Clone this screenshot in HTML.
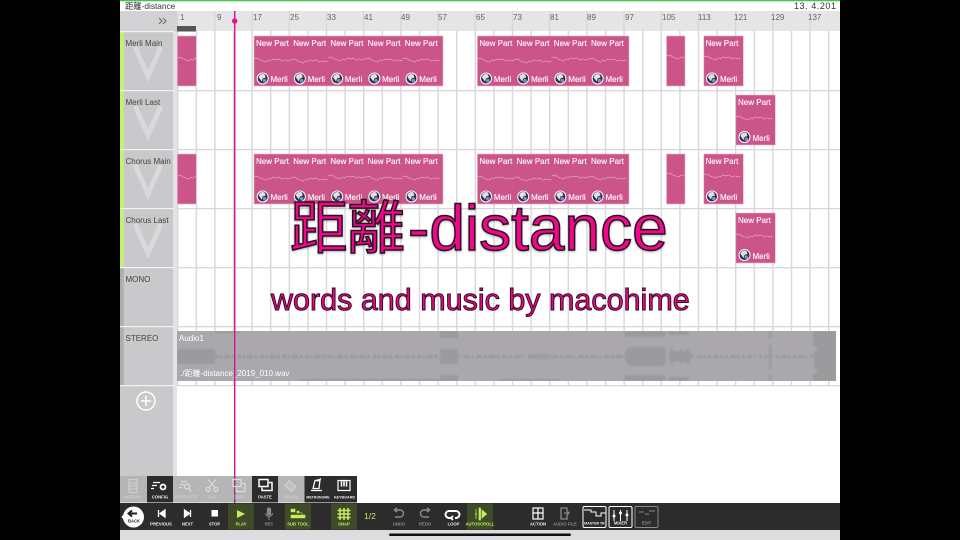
<!DOCTYPE html>
<html><head><meta charset="utf-8"><style>
html,body{margin:0;padding:0;background:#000;width:960px;height:540px;overflow:hidden}
svg{display:block;filter:blur(.35px)}
text{font-family:"Liberation Sans","Noto Sans CJK JP",sans-serif}
.np,.ml{fill:#fff;font-size:8px;stroke:#fff;stroke-width:.12}
.tl{fill:#444;font-size:8px}
.rn{fill:#666;font-size:8px}
.lb{font-size:4.2px;font-weight:bold;fill:#eee;text-anchor:middle}
.lg{font-size:4.2px;font-weight:bold;fill:#8c8c8c;text-anchor:middle}
.lh{font-size:4.2px;font-weight:bold;fill:#c6ec62;text-anchor:middle}
.lu{font-size:4.2px;font-weight:bold;fill:#cdcdcd;text-anchor:middle}
.s{fill:none;stroke:#fff;stroke-width:1.3}
.sg{fill:none;stroke:#8a8a8a;stroke-width:1.3}
.sh{fill:none;stroke:#c6ec62;stroke-width:1.3}
.su{fill:none;stroke:#dcdcdc;stroke-width:1.2}
.t1{fill:#f0088c;stroke:#2a0f20;stroke-width:1.5;filter:drop-shadow(0 1px 1px rgba(0,0,0,.3))}
</style></head><body>
<svg width="960" height="540" viewBox="0 0 960 540" xmlns="http://www.w3.org/2000/svg">
<defs>
<pattern id="g" x="177" y="0" width="18.6" height="540" patternUnits="userSpaceOnUse"><rect x="0" y="0" width="1.4" height="540" fill="#d9d7d9"/></pattern>
<pattern id="rg" x="177" y="0" width="37.2" height="540" patternUnits="userSpaceOnUse"><rect x="0" y="0" width="1.2" height="540" fill="#d6d5d7"/></pattern>
<g id="w"><path d="M0 0l2 1 2-1 2 2 3 1 3 1 2-2 2 1 3-2 3 1 3-1 3 2 3-1 3 1 3-1" fill="none" stroke="#e9a3c1" stroke-width=".9" stroke-dasharray="2 .6"/></g>
<g id="a"><circle r="6" fill="#fff"/><circle r="5" fill="#28304e"/><path d="M-4-1a4 4 0 0 1 6-3l1 3-3 1 -1 3z" fill="#e6dce6"/><circle cx="1.800" cy="2.200" r="1.800" fill="#7f8fc0"/></g>
<g id="v"><path d="M-13 0L0 29 13 0" fill="none" stroke="#d9d8da" stroke-width="5"/></g>
</defs>

<rect width="960" height="540" fill="#000"/>
<rect x="120" y="0" width="720" height="540" fill="#fff"/>
<rect x="120" y="0" width="720" height="1.300" fill="#3fc94a"/>

<!-- grid -->
<rect x="177" y="31" width="663" height="354" fill="url(#g)"/>
<rect x="177" y="11" width="663" height="20" fill="#e5e4e6"/>
<rect x="177" y="11" width="663" height="20" fill="url(#rg)"/>
<g fill="#d9d7d9">
<rect x="177" y="90" width="663" height="1.300"/><rect x="177" y="149" width="663" height="1.300"/><rect x="177" y="208" width="663" height="1.300"/><rect x="177" y="267" width="663" height="1.300"/><rect x="177" y="326" width="663" height="1.300"/><rect x="177" y="385" width="663" height="1.300"/>
</g>
<rect x="177" y="26" width="19" height="5.500" fill="#555"/>

<!-- title strip -->
<text x="125" y="9" font-size="8.300" fill="#333">距離-distance</text>
<text x="794" y="9" font-size="9" fill="#333" textLength="42">13. 4.201</text>

<!-- ruler numbers -->
<g class="rn">
<text x="180" y="20">1</text><text x="217" y="20">9</text><text x="253" y="20">17</text><text x="290" y="20">25</text><text x="327" y="20">33</text><text x="364" y="20">41</text><text x="401" y="20">49</text><text x="438" y="20">57</text><text x="476" y="20">65</text><text x="513" y="20">73</text><text x="550" y="20">81</text><text x="587" y="20">89</text><text x="625" y="20">97</text><text x="662" y="20">105</text><text x="698" y="20">113</text><text x="734" y="20">121</text><text x="771" y="20">129</text><text x="808" y="20">137</text>
</g>

<!-- left panel -->
<rect x="120" y="11" width="57" height="465" fill="#c9c8ca"/>
<rect x="173" y="32" width="4" height="444" fill="#e3e2e4"/>
<rect x="120" y="11" width="57" height="20" fill="#d2d1d3"/>
<rect x="120" y="32" width="3.700" height="235" fill="#c5f26e"/>
<rect x="120" y="267" width="3.700" height="118" fill="#aeadaf"/>
<g fill="#f2f1f3">
<rect x="120" y="31" width="55" height="1.200"/><rect x="120" y="90" width="55" height="1.200"/><rect x="120" y="149" width="55" height="1.200"/><rect x="120" y="208" width="55" height="1.200"/><rect x="120" y="267" width="55" height="1.200"/><rect x="120" y="326" width="55" height="1.200"/><rect x="120" y="385" width="55" height="1.200"/>
</g>
<path d="M159 18l3 3-3 3M163 18l3 3-3 3" fill="none" stroke="#666" stroke-width="1"/>
<use href="#v" x="148" y="47"/><use href="#v" x="148" y="106"/><use href="#v" x="148" y="165"/><use href="#v" x="148" y="224"/>
<text class="tl" x="125.500" y="46">Merli Main</text>
<text class="tl" x="125.500" y="105">Merli Last</text>
<text class="tl" x="125.500" y="164">Chorus Main</text>
<text class="tl" x="125.500" y="223">Chorus Last</text>
<text class="tl" x="125.500" y="282">MONO</text>
<text class="tl" x="125.500" y="341">STEREO</text>
<circle cx="146" cy="401" r="9" fill="none" stroke="#fff" stroke-width="1.500"/>
<path d="M146 396v10M141 401h10" stroke="#fff" stroke-width="1.600"/>

<!-- clips -->
<g fill="#cb5588" stroke="#e9b5cd" stroke-width=".6">
<rect x="177.300" y="36" width="19" height="50"/><rect x="254" y="36" width="189" height="50"/><rect x="477.400" y="36" width="151.600" height="50"/><rect x="666.500" y="36" width="18.500" height="50"/><rect x="703.800" y="36" width="39.500" height="50"/>
<rect x="735.800" y="95" width="39.500" height="50"/>
<rect x="177.300" y="154" width="19" height="50"/><rect x="254" y="154" width="189" height="50"/><rect x="477.400" y="154" width="151.600" height="50"/><rect x="666.500" y="154" width="18.500" height="50"/><rect x="703.800" y="154" width="39.500" height="50"/>
<rect x="735.800" y="213" width="39.500" height="50"/>
</g>
<clipPath id="c1"><rect x="177" y="30" width="19" height="200"/></clipPath>
<clipPath id="c2"><rect x="666.500" y="30" width="18.500" height="200"/></clipPath>
<!-- waves -->
<g clip-path="url(#c1)"><use href="#w" x="177" y="57"/><use href="#w" x="177" y="175"/></g>
<g clip-path="url(#c2)"><use href="#w" x="666.500" y="55"/><use href="#w" x="666.500" y="173"/></g>
<use href="#w" x="254" y="58"/><use href="#w" x="291.200" y="59"/><use href="#w" x="328.400" y="57"/><use href="#w" x="365.600" y="58"/><use href="#w" x="402.800" y="58"/><use href="#w" x="477.400" y="58"/><use href="#w" x="514.600" y="59"/><use href="#w" x="551.800" y="57"/><use href="#w" x="589" y="58"/><use href="#w" x="704" y="56"/><use href="#w" x="736" y="116"/>
<use href="#w" x="254" y="176"/><use href="#w" x="291.200" y="177"/><use href="#w" x="328.400" y="175"/><use href="#w" x="365.600" y="176"/><use href="#w" x="402.800" y="176"/><use href="#w" x="477.400" y="176"/><use href="#w" x="514.600" y="177"/><use href="#w" x="551.800" y="175"/><use href="#w" x="589" y="176"/><use href="#w" x="704" y="174"/><use href="#w" x="736" y="234"/>
<!-- avatars -->
<use href="#a" x="262.700" y="78.500"/><use href="#a" x="299.900" y="78.500"/><use href="#a" x="337.100" y="78.500"/><use href="#a" x="374.300" y="78.500"/><use href="#a" x="411.500" y="78.500"/><use href="#a" x="486" y="78.500"/><use href="#a" x="523.200" y="78.500"/><use href="#a" x="560.400" y="78.500"/><use href="#a" x="597.600" y="78.500"/><use href="#a" x="712" y="78.500"/><use href="#a" x="744.500" y="137"/>
<use href="#a" x="262.700" y="196.500"/><use href="#a" x="299.900" y="196.500"/><use href="#a" x="337.100" y="196.500"/><use href="#a" x="374.300" y="196.500"/><use href="#a" x="411.500" y="196.500"/><use href="#a" x="486" y="196.500"/><use href="#a" x="523.200" y="196.500"/><use href="#a" x="560.400" y="196.500"/><use href="#a" x="597.600" y="196.500"/><use href="#a" x="712" y="196.500"/><use href="#a" x="744.500" y="255"/>
<!-- clip text -->
<text class="np" x="256" y="46">New Part</text><text class="np" x="293.200" y="46">New Part</text><text class="np" x="330.400" y="46">New Part</text><text class="np" x="367.600" y="46">New Part</text><text class="np" x="404.800" y="46">New Part</text><text class="np" x="479.400" y="46">New Part</text><text class="np" x="516.600" y="46">New Part</text><text class="np" x="553.800" y="46">New Part</text><text class="np" x="591" y="46">New Part</text><text class="np" x="705.500" y="46">New Part</text>
<text class="np" x="738" y="105">New Part</text>
<text class="np" x="256" y="164">New Part</text><text class="np" x="293.200" y="164">New Part</text><text class="np" x="330.400" y="164">New Part</text><text class="np" x="367.600" y="164">New Part</text><text class="np" x="404.800" y="164">New Part</text><text class="np" x="479.400" y="164">New Part</text><text class="np" x="516.600" y="164">New Part</text><text class="np" x="553.800" y="164">New Part</text><text class="np" x="591" y="164">New Part</text><text class="np" x="705.500" y="164">New Part</text>
<text class="np" x="738" y="223">New Part</text>
<text class="ml" x="270.500" y="82">Merli</text><text class="ml" x="307.700" y="82">Merli</text><text class="ml" x="344.900" y="82">Merli</text><text class="ml" x="382.100" y="82">Merli</text><text class="ml" x="419.300" y="82">Merli</text><text class="ml" x="493.900" y="82">Merli</text><text class="ml" x="531.100" y="82">Merli</text><text class="ml" x="568.300" y="82">Merli</text><text class="ml" x="605.500" y="82">Merli</text><text class="ml" x="720" y="82">Merli</text>
<text class="ml" x="752.500" y="141">Merli</text>
<text class="ml" x="270.500" y="200">Merli</text><text class="ml" x="307.700" y="200">Merli</text><text class="ml" x="344.900" y="200">Merli</text><text class="ml" x="382.100" y="200">Merli</text><text class="ml" x="419.300" y="200">Merli</text><text class="ml" x="493.900" y="200">Merli</text><text class="ml" x="531.100" y="200">Merli</text><text class="ml" x="568.300" y="200">Merli</text><text class="ml" x="605.500" y="200">Merli</text><text class="ml" x="720" y="200">Merli</text>
<text class="ml" x="752.500" y="259">Merli</text>

<!-- audio clip -->
<rect x="177" y="331" width="659" height="50" fill="#aaa8ac"/>
<clipPath id="ac"><rect x="177" y="331" width="659" height="50"/></clipPath>
<g clip-path="url(#ac)">
<g fill="#9b9a9d" style="filter:blur(.7px)">
<path d="M177 349h38v15h-38z"/>
<path d="M440 349l18 0 0 15-18 0z"/>
<path d="M625 351q3-4 8-4l28 0q5 0 5 5v9q0 4-5 5h-28q-6 0-8-6z"/>
<path d="M669 351h22v11h-22zM671 348h2v17h-2zM680 349h2v15h-2zM687 349h2v15h-2z"/>
<path d="M769 345h2.500v24h-2.500z"/>
<path d="M813 331h25v50h-25v-7l6-3-5-3 0-16 5-3-6-3z"/>
<path d="M440 331h18v7h-18zM440 375h18v6h-18zM625 331h40v6h-40zM625 375h40v6h-40zM669 331h20v4h-20zM669 377h20v4h-20zM769 331h2.500v7h-2.500zM769 375h2.500v6h-2.500z"/>
<path d="M215 331h25v2h-25zM300 379h140v2h-140zM500 379h60v2h-60z"/>
</g>
<g fill="none" stroke="#9b9a9d" style="filter:blur(.4px)">
<path d="M215 356.500H440" stroke-width="3.500" stroke-dasharray="4 1.500 2 2 6 1.500 3 2.500"/>
<path d="M458 356.500H625" stroke-width="3" stroke-dasharray="3 2 7 1.500 2 3 5 2"/>
<path d="M530 356.500H552" stroke-width="5" stroke-dasharray="2 1"/>
<path d="M691 356.500H813" stroke-width="3" stroke-dasharray="3 2.500 5 1.500 2 3"/>
</g>
</g>
<text x="179" y="341" font-size="8" fill="#fff">Audio1</text>
<text x="180" y="376" font-size="8" fill="#fff">./距離-distance_2019_010.wav</text>

<!-- titles -->
<text class="t1" x="290" y="248" font-size="57.500">距離</text>
<text class="t1" x="408" y="250" font-size="64">-distance</text>
<text x="271" y="310" font-size="30.500" fill="#e8088a" stroke="#33091f" stroke-width="1">words and music by macohime</text>

<!-- playhead -->
<rect x="234" y="11" width="1.400" height="492" fill="#d6148c"/>
<circle cx="234.700" cy="21" r="2.700" fill="#e0148c"/>

<!-- upper toolbar -->
<rect x="120" y="476" width="237" height="26.500" fill="rgba(70,70,70,.4)"/>
<rect x="147" y="476" width="26" height="26.500" fill="#2c2c2c"/>
<rect x="252" y="476" width="26" height="26.500" fill="#2c2c2c"/>
<rect x="304.500" y="476" width="52.500" height="26.500" fill="#2c2c2c"/>
<g transform="translate(0,-1.500)">
<path d="M129 481h8v13h-8zM129 484.500h8M129 487.500h8M129 490.500h8" fill="none" stroke="#d2d2d2" stroke-width="1"/>
<g class="s"><path d="M153 484h7M152 487h5M151 490h3"/><circle cx="163" cy="488.500" r="2.500" stroke-width="1.800"/></g>
<g class="su"><path d="M181 483h6M180 486h4M179 489h3"/><circle cx="187" cy="488" r="2.500"/><path d="M189 490l2 3"/></g>
<g class="su"><circle cx="208" cy="491" r="2"/><circle cx="216" cy="491" r="2"/><path d="M209 489l7-8M215 489l-7-8"/></g>
<g class="su"><rect x="233" y="481" width="8" height="7"/><path d="M242 485h3v8h-9v-4"/></g>
<g class="s"><rect x="259" y="481" width="9" height="7" stroke-width="1.500"/><path d="M269 484h3v8h-10v-3" stroke-width="1.500"/></g>
<path d="M285 487l4-5 7 6-4 5z" fill="#c0c0c0" stroke="#d4d4d4" stroke-width="1"/>
<g class="s"><path d="M313 490l2-8 5-1-1 9zM311 492h11M317 483l4-3" stroke-width="1.300"/></g>
<g class="s"><rect x="338" y="482" width="12" height="10" stroke-width="1.200"/><path d="M341.500 482v6M344 482v6M346.500 482v6" stroke-width="1.500"/></g>
</g>
<text class="lu" x="133" y="498.500">HISTORY</text><text class="lb" x="160" y="498.500">CONFIG</text><text class="lu" x="186" y="498.500">PROPERTY</text><text class="lu" x="212" y="498.500">CUT</text><text class="lu" x="239" y="498.500">COPY</text><text class="lb" x="265" y="498.500">PASTE</text><text class="lu" x="291" y="498.500">ERASE</text><text class="lb" x="318" y="498.500" style="font-size:3.500px">METRONOME</text><text class="lb" x="344.500" y="498.500" style="font-size:3.700px">KEYBOARD</text>

<!-- bottom bar -->
<rect x="120" y="503" width="720" height="27" fill="#2c2c2c"/>
<rect x="120" y="530" width="720" height="10" fill="#dedcde"/>
<rect x="389" y="533.500" width="182" height="2.500" rx="1.200" fill="#111"/>
<g fill="#3f4a28"><rect x="228" y="503.500" width="26" height="26"/><rect x="285" y="503.500" width="26" height="26"/><rect x="331" y="503.500" width="26" height="26"/><rect x="467" y="503.500" width="26" height="26"/></g>

<circle cx="133.500" cy="517" r="10.500" fill="#fff"/>
<path d="M121.500 517l4-5v10z" fill="#fff"/>
<path d="M132 510.500l-3.500 3 3.500 3M129 513.500h8" fill="none" stroke="#222" stroke-width="2"/>
<text x="134" y="522.500" font-size="4.200" font-weight="bold" fill="#222" text-anchor="middle">BACK</text>

<path d="M158.500 510v7M165 510v7l-5-3.500z" fill="#fff" stroke="#fff" stroke-width="1.300"/>
<path d="M184.500 510v7l5-3.500zM190.500 510v7" fill="#fff" stroke="#fff" stroke-width="1.300"/>
<rect x="211.500" y="510" width="6.500" height="6.500" fill="#fff"/>
<path d="M237 510l8 4-8 4z" fill="#c6ec62"/>
<g class="sg"><rect x="267.500" y="508" width="3" height="7" rx="1.500" fill="#8a8a8a"/><path d="M265.500 513a3.500 3.500 0 0 0 7 0M269 517v3" stroke-width="1"/></g>
<path d="M291 509h4v3h-4zM297 511h2v2h-2zM291 515h14v3h-14zM300 512l3 2" fill="#c6ec62" stroke="#c6ec62" stroke-width=".6"/>
<path d="M340 508v12M344 508v12M348 508v12M337.500 510.500h13M337.500 514h13M337.500 517.500h13" class="sh" style="stroke-width:1.500"/>
<text x="370" y="519" font-size="8.500" fill="#c6ec62" text-anchor="middle">1/2</text>
<path d="M395 510h5a3.500 3.500 0 0 1 0 7h-5M397 508l-2.500 2 2.500 2" class="sg" style="stroke-width:1.500"/>
<path d="M429 510h-5a3.500 3.500 0 0 0 0 7h5M427 508l2.500 2-2.500 2" class="sg" style="stroke-width:1.500"/>
<path d="M451 518h-2a3.500 3.500 0 0 1 0-7h7a3.500 3.500 0 0 1 0 7h-1M453 516l-2 2 2 2" class="s" style="stroke-width:1.900"/>
<path d="M475 514h2M476 509v10M479 508h1.500v12H479zM482 510l4.500 4-4.500 4z" fill="#c6ec62" stroke="#c6ec62" stroke-width=".8"/>
<rect x="533" y="508" width="10" height="11" class="s" style="stroke-width:1.200"/><path d="M538 508v11M533 513h10" class="s" style="stroke-width:1.200"/>
<path d="M561 508h6v3l2 2-2 2v4h-6zM564 513h4" class="sg"/>
<rect x="583" y="506.500" width="23" height="21" rx="1.500" class="s" style="stroke-width:1"/>
<path d="M584 510h7v2h5v4h5v-3h5" class="s" style="stroke-width:1"/>
<rect x="609" y="506.500" width="23" height="21" rx="1.500" class="s" style="stroke-width:1"/>
<path d="M614 510v11M620.500 510v11M627 510v11" class="s" style="stroke-width:1"/><circle cx="614" cy="516" r="1.500" fill="#fff"/><circle cx="620.500" cy="513" r="1.500" fill="#fff"/><circle cx="627" cy="515" r="1.500" fill="#fff"/>
<rect x="635" y="506.500" width="23" height="21" rx="1.500" class="sg" style="stroke-width:1"/>
<path d="M639 512h5M645 514h4M649 511h6" class="sg" style="stroke-width:1"/>

<text class="lb" x="161" y="525.500">PREVIOUS</text><text class="lb" x="187.500" y="525.500">NEXT</text><text class="lb" x="214.500" y="525.500">STOP</text><text class="lh" x="241" y="525.500">PLAY</text><text class="lg" x="269" y="525.500">REC</text><text class="lh" x="298" y="525.500">SUB TOOL</text><text class="lh" x="344" y="525.500">SNAP</text><text class="lg" x="399" y="525.500">UNDO</text><text class="lg" x="425" y="525.500">REDO</text><text class="lb" x="453.500" y="525.500">LOOP</text><text class="lh" x="480" y="525.500">AUTOSCROLL</text><text class="lb" x="538" y="525.500">ACTION</text><text class="lg" x="565" y="525.500">AUDIO FILE</text><text class="lb" x="594.500" y="524.500" style="font-size:3.500px">MASTER TR</text><text class="lb" x="620.500" y="524.500">MIXER</text><text class="lg" x="646.500" y="524.500">EDIT</text>
</svg>
</body></html>
